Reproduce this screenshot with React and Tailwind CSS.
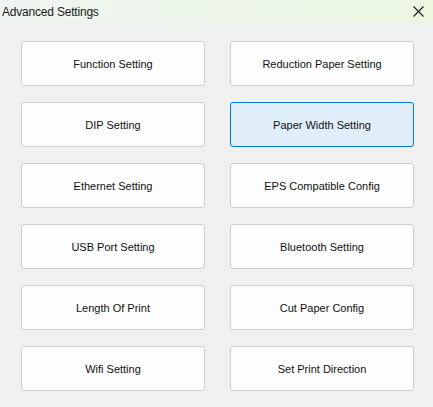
export default function App() {
  const rows = [
    ["Function Setting", "Reduction Paper Setting"],
    ["DIP Setting", "Paper Width Setting"],
    ["Ethernet Setting", "EPS Compatible Config"],
    ["USB Port Setting", "Bluetooth Setting"],
    ["Length Of Print", "Cut Paper Config"],
    ["Wifi Setting", "Set Print Direction"],
  ];
  return (
    <div className="w-[433px] h-[407px] bg-[#f0f0f0] flex flex-col overflow-hidden" style={{ fontFamily: '"Liberation Sans", Arial, sans-serif' }}>
      <div className="h-[23px] flex items-center justify-between pl-[2px] pr-[8px] bg-gradient-to-r from-[#eef5f1] to-[#ebf7e1]">
        <span className="text-[12px] text-[#1a1a1a] tracking-[-0.2px] pt-[1px]">Advanced Settings</span>
        <svg width="11" height="11" viewBox="0 0 11 11" className="mr-[1px]">
          <path d="M0.5 0.5 L10.5 10.5 M10.5 0.5 L0.5 10.5" stroke="#1a1a1a" strokeWidth="1.1" />
        </svg>
      </div>
      <div className="grid grid-cols-[184px_184px] gap-x-[25px] gap-y-[16px] pl-[21px] pt-[18px]">
        {rows.flat().map((label) => {
          const sel = label === "Paper Width Setting";
          return (
            <div
              key={label}
              className={
                "h-[45px] rounded-[3px] border flex items-center justify-center pt-[1px] text-[11px] text-[#111] " +
                (sel ? "bg-[#e0eef9] border-[#0078d4]" : "bg-[#fdfdfd] border-[#cfcfcf]")
              }
            >
              {label}
            </div>
          );
        })}
      </div>
    </div>
  );
}
